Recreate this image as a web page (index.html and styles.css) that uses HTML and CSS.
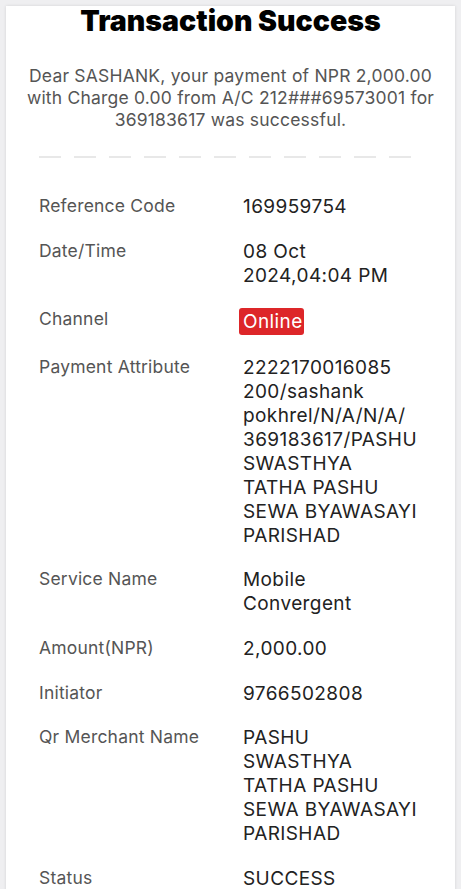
FILE: index.html
```html
<!DOCTYPE html>
<html lang="en">
<head>
  <meta charset="UTF-8" />
  <meta name="viewport" content="width=device-width, initial-scale=1.0"/>
  <title>Transaction Success</title>
  <link rel="stylesheet" href="styles.css">
</head>
<body>
<div class="receipt">
  <h1>Transaction Success</h1>
  <p class="mensagem">Dear SASHANK, your payment of NPR 2,000.00 with Charge 0.00 from A/C 212###69573001 for 369183617 was successful.</p>

  <div class="divisor"></div>

  <div class="detalhes">
    <div class="linha">
      <div class="rotulo">Reference Code</div>
      <div class="valor">169959754</div>
    </div>
    <div class="linha">
      <div class="rotulo">Date/Time</div>
      <div class="valor">08 Oct<br>2024,04:04 PM</div>
    </div>
    <div class="linha">
      <div class="rotulo">Channel</div>
      <div class="valor"><span class="canal">Online</span></div>
    </div>
    <div class="linha">
      <div class="rotulo">Payment Attribute</div>
      <div class="valor">2222170016085<br>200/sashank<br>pokhrel/N/A/N/A/<br>369183617/PASHU<br>SWASTHYA<br>TATHA PASHU<br>SEWA BYAWASAYI<br>PARISHAD</div>
    </div>
    <div class="linha">
      <div class="rotulo">Service Name</div>
      <div class="valor">Mobile<br>Convergent</div>
    </div>
    <div class="linha">
      <div class="rotulo">Amount(NPR)</div>
      <div class="valor">2,000.00</div>
    </div>
    <div class="linha">
      <div class="rotulo">Initiator</div>
      <div class="valor">9766502808</div>
    </div>
    <div class="linha">
      <div class="rotulo">Qr Merchant Name</div>
      <div class="valor">PASHU<br>SWASTHYA<br>TATHA PASHU<br>SEWA BYAWASAYI<br>PARISHAD</div>
    </div>
    <div class="linha">
      <div class="rotulo">Status</div>
      <div class="valor">SUCCESS</div>
    </div>
  </div>
</div>
</body>
</html>
```

FILE: styles.css
```css
body {
  font-family: 'Inter', sans-serif;
  background-color: #efeff1;
  color: #222;
  margin: 0;
  padding: 0;
}

.receipt {
  margin: 6px 6px 0;
  background: #fff;
  padding: 0 0 40px;
  box-shadow: 0 0 3px rgba(0, 0, 0, 0.12);
  min-height: 900px;
}

h1 {
  font-family: 'Inter', sans-serif;
  font-weight: 900;
  font-size: 28.5px;
  line-height: 30px;
  text-align: center;
  color: #000;
  margin: 0;
}

.mensagem {
  text-align: center;
  color: #555;
  font-size: 17.5px;
  letter-spacing: 0.2px;
  line-height: 22px;
  margin: 29px 8px 0;
}

/* linha tracejada */
.divisor {
  margin: 25px 44px 0 33px;
  height: 2px;
  background-image: linear-gradient(to right, #e8e8e8 22px, transparent 22px);
  background-size: 35px 2px;
}

.detalhes {
  padding: 37px 0 0 33px;
}

.linha {
  display: flex;
  margin-bottom: 20.6px;
}

.rotulo {
  width: 204px;
  flex-shrink: 0;
  color: #555;
  font-size: 17.5px;
  letter-spacing: 0.2px;
  line-height: 24px;
  margin-top: -1px;
}

.valor {
  font-size: 19px;
  letter-spacing: 0.4px;
  line-height: 24px;
  color: #222;
}

.canal {
  display: inline-block;
  background-color: #dd2629;
  color: #fff;
  border-radius: 3px;
  padding: 2px 1px 2px 4px;
  margin-left: -4px;
  line-height: 23px;
}
```
